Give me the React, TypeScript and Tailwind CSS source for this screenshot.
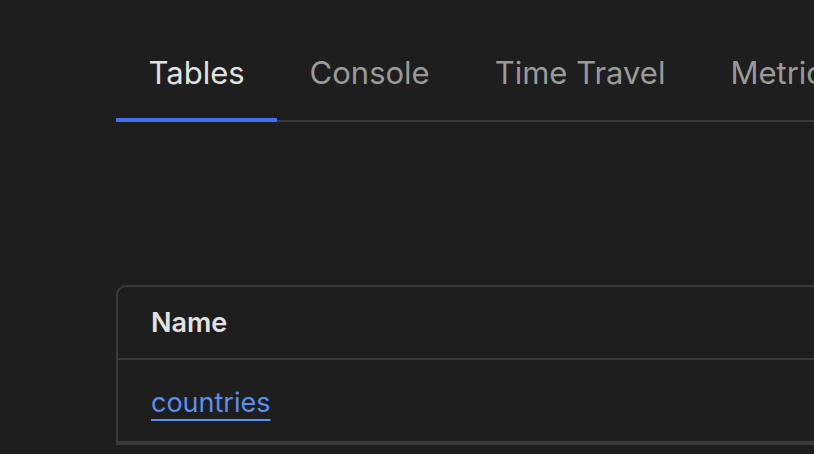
const tabs = ["Tables", "Console", "Time Travel", "Metrics"];

export default function App() {
  return (
    <div
      className="h-[454px] w-[814px] overflow-hidden bg-[#1e1e1e] pl-[116px]"
      style={{ fontFamily: "Inter, 'Noto Sans', sans-serif" }}
    >
      {/* Tabs */}
      <div className="flex w-[1000px] border-b-2 border-[#3a3a3a] pt-[55px]">
        {tabs.map((t, i) => (
          <div
            key={t}
            className={`-mb-[2px] whitespace-nowrap px-[32.5px] pb-[27px] text-[31px] leading-[36px] ${
              i === 0 ? "border-b-4 border-[#3b73f0] text-[#e2e2e2]" : "border-b-4 border-transparent text-[#9a9a9a]"
            }`}
          >
            {t}
          </div>
        ))}
      </div>

      {/* Table */}
      <div className="mt-[163px] w-[1000px] rounded-tl-[10px] border-2 border-[#3a3a3a]">
        <div className="flex h-[73px] items-center border-b-2 border-[#3a3a3a] px-[33px] pt-[2px] text-[27px] font-semibold text-[#e2e2e2]">
          Name
        </div>
        <div className="flex h-[83px] items-center border-b-2 border-[#3a3a3a] px-[33px] pt-[6px]">
          <a className="text-[27px] text-[#5b8ff0] underline decoration-2 underline-offset-[7px]" href="#">
            countries
          </a>
        </div>
      </div>
    </div>
  );
}
